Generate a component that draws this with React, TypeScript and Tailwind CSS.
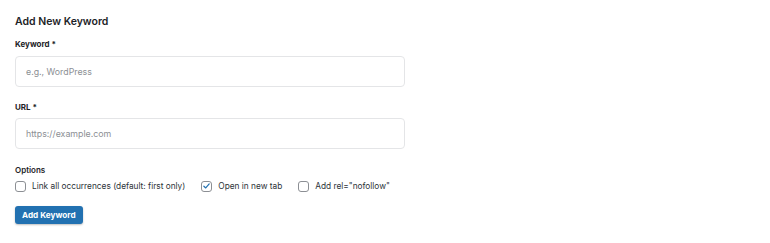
import React from "react";

const Check = ({ checked, label }: { checked?: boolean; label: string }) => (
  <label className="flex items-center gap-[6px]">
    <span className="flex h-[11px] w-[11px] items-center justify-center rounded-[3px] border border-[#8c8f94] bg-white">
      {checked && (
        <svg viewBox="0 0 12 12" className="h-[10px] w-[10px]">
          <path d="M2.5 6.3 L5 8.6 L9.6 3.2" fill="none" stroke="#2271b1" strokeWidth="1.6" strokeLinecap="round" strokeLinejoin="round" />
        </svg>
      )}
    </span>
    <span className="text-[8.3px] leading-[14px] text-[#2c3338]">{label}</span>
  </label>
);

export default function App() {
  return (
    <div className="h-[243px] w-[770px] bg-white px-[15px] pt-[14px]" style={{ fontFamily: "Inter, 'Liberation Sans', sans-serif" }}>
      <h2 className="text-[10.5px] font-semibold leading-[16px] text-[#1d2327]">Add New Keyword</h2>

      <div className="mt-[8px] w-[390px]">
        <div className="text-[8px] font-bold leading-[12px] text-[#1d2327]">Keyword *</div>
        <input
          className="mt-[6px] h-[31px] w-full rounded-[4px] border border-[#e4e5e7] px-[10px] text-[8.8px] text-[#2c3338] outline-none placeholder:text-[#8c8f94]"
          placeholder="e.g., WordPress"
        />

        <div className="mt-[14px] text-[8px] font-bold leading-[12px] text-[#1d2327]">URL *</div>
        <input
          className="mt-[5px] h-[31px] w-full rounded-[4px] border border-[#e4e5e7] px-[10px] text-[8.8px] text-[#2c3338] outline-none placeholder:text-[#8c8f94]"
          placeholder="https://example.com"
        />
      </div>

      <div className="mt-[15px] text-[8px] font-semibold leading-[12px] text-[#1d2327]">Options</div>
      <div className="mt-[3px] flex items-center gap-[16px]">
        <Check label="Link all occurrences (default: first only)" />
        <Check checked label="Open in new tab" />
        <Check label='Add rel="nofollow"' />
      </div>

      <button className="mt-[13px] h-[18px] rounded-[3px] bg-[#2271b1] px-[7px] text-[8.2px] font-bold text-white shadow-[0_1px_2px_rgba(0,0,0,0.25)]">
        Add Keyword
      </button>
    </div>
  );
}
